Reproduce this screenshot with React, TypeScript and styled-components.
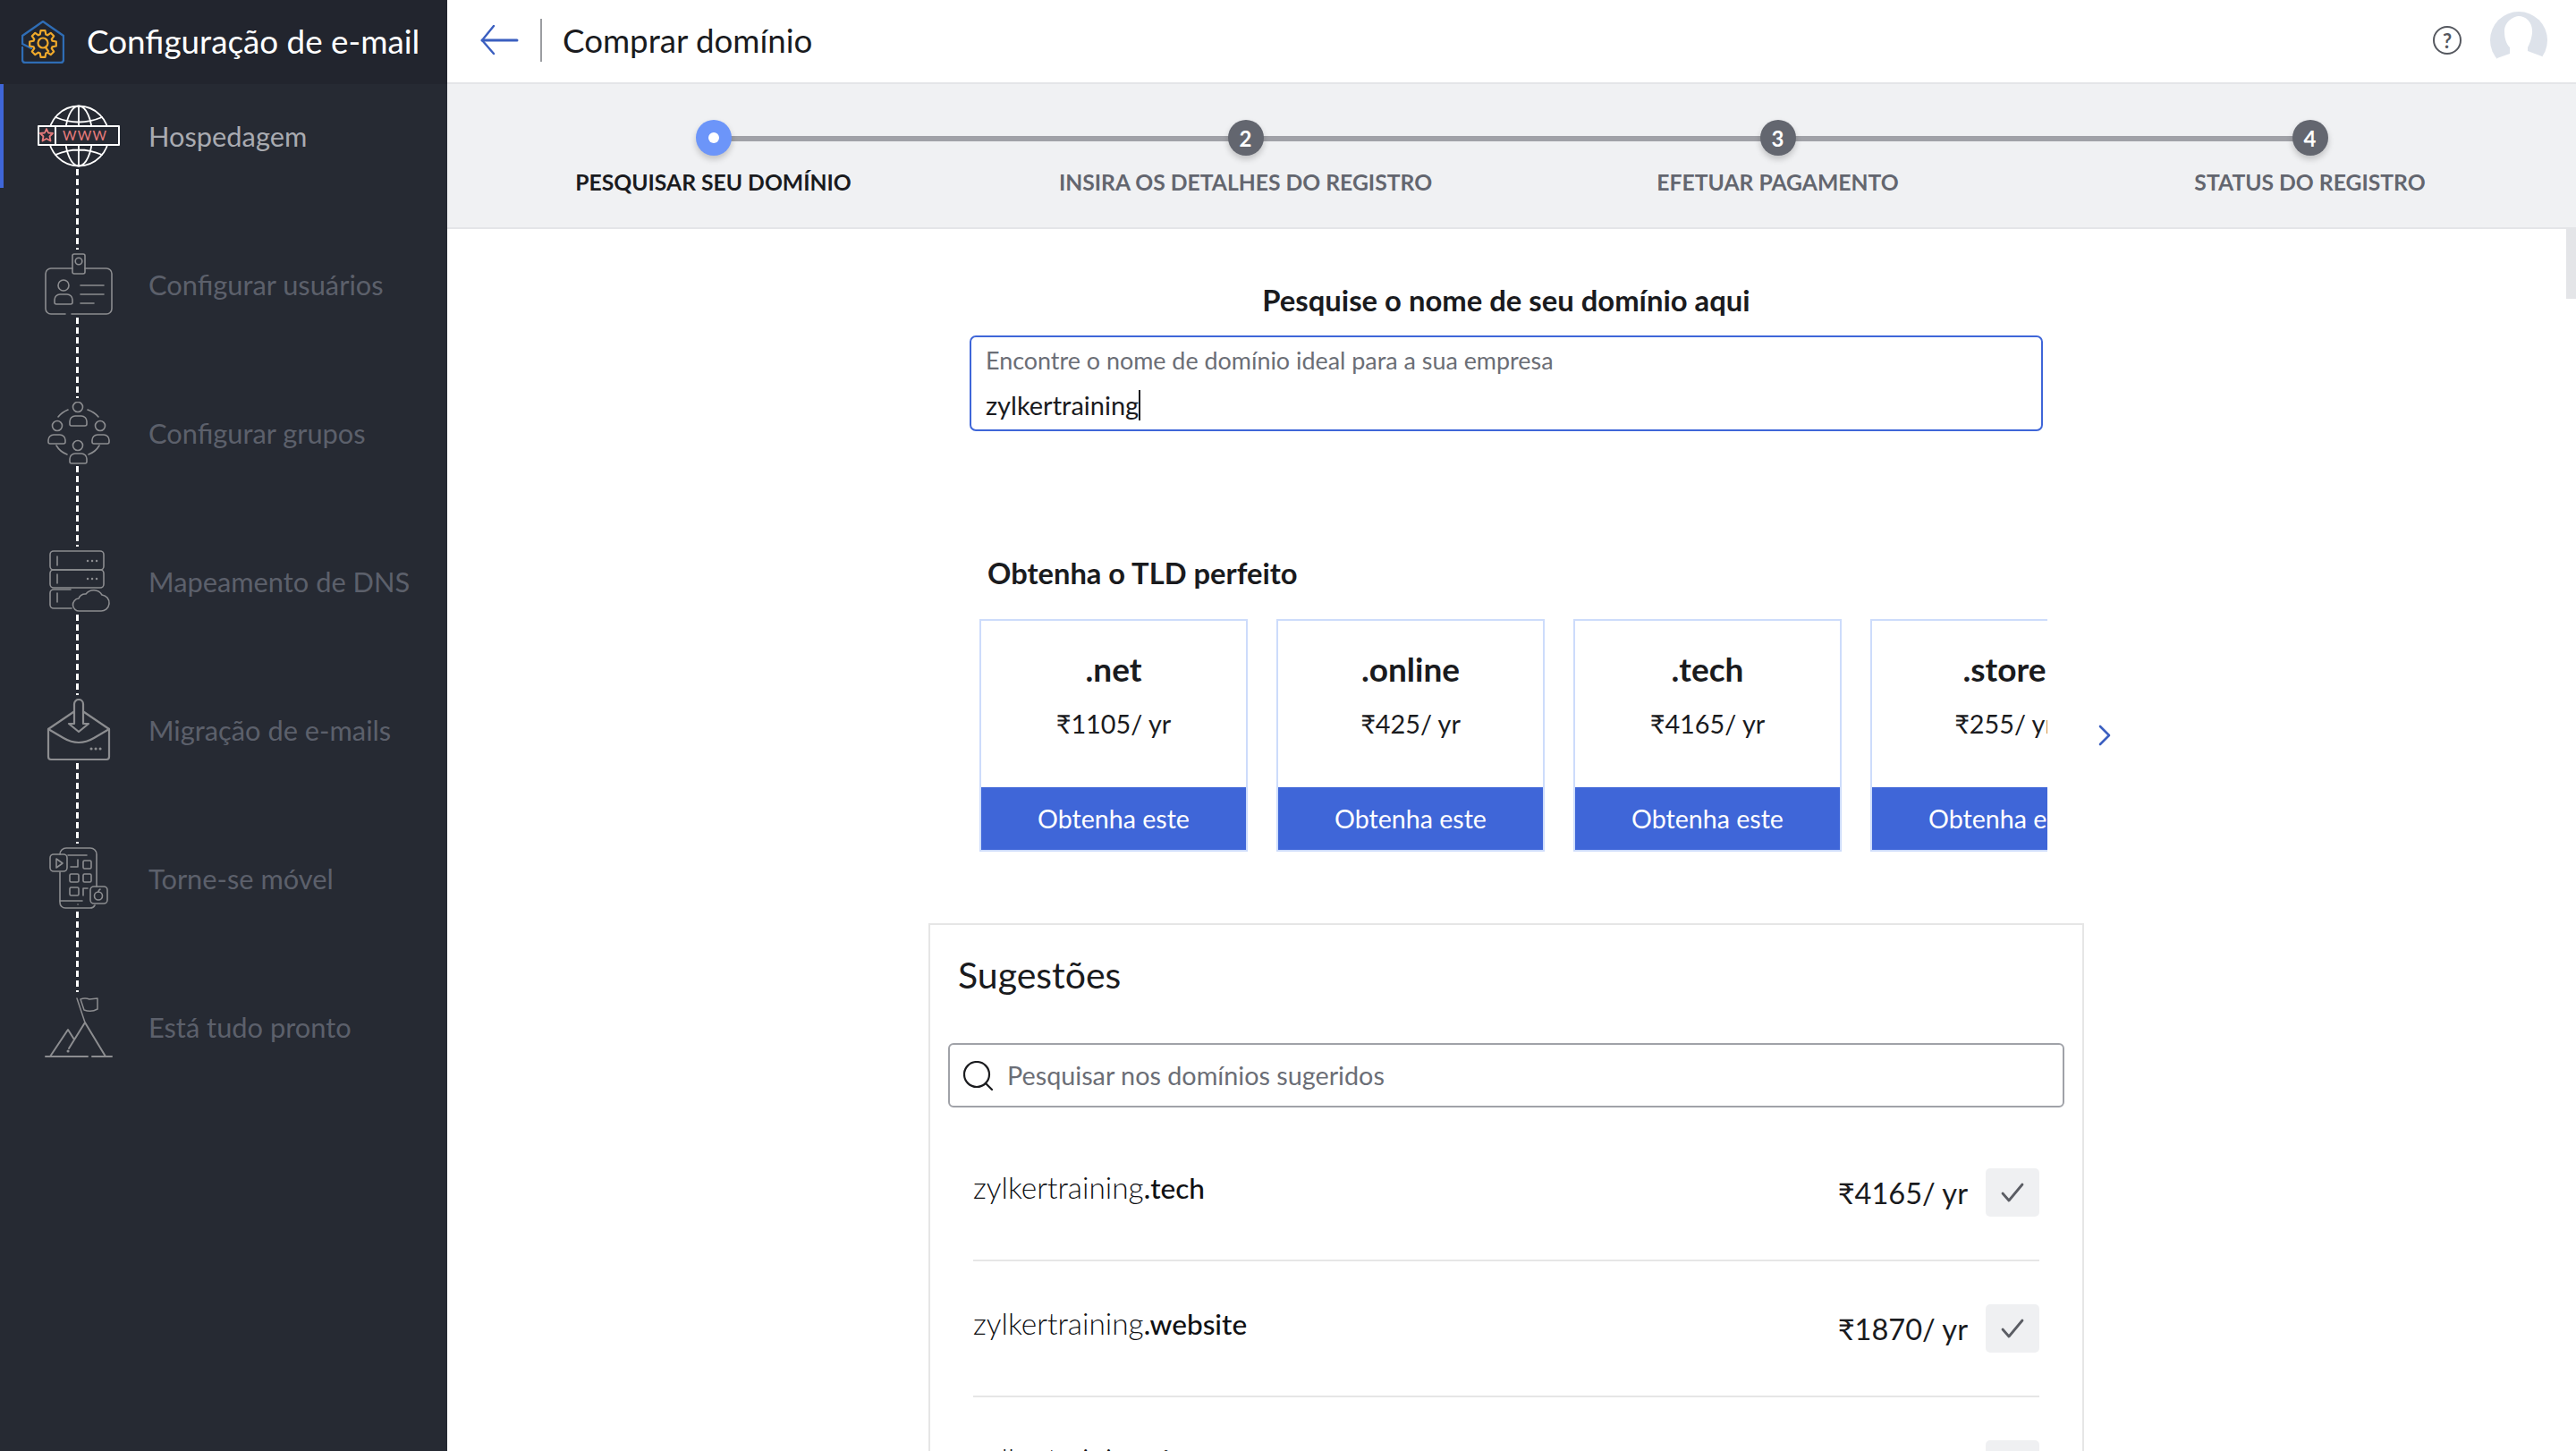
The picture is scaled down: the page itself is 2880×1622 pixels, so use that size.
import React from "react";
import styled, { createGlobalStyle } from "styled-components";

const GlobalStyle = createGlobalStyle`
  html, body, #root {
    margin: 0;
    padding: 0;
    height: 100%;
  }
  body {
    font-family: Lato, "Noto Sans", "DejaVu Sans", sans-serif;
    color: #1a1b1e;
    background: #ffffff;
    overflow: hidden;
  }
  * {
    box-sizing: border-box;
  }
`;

const Page = styled.div`
  display: flex;
  width: 2880px;
  height: 1622px;
  overflow: hidden;
`;

const Sidebar = styled.aside`
  width: 500px;
  flex-shrink: 0;
  background: #262a33;
`;

const Brand = styled.div`
  display: flex;
  align-items: center;
  height: 94px;
  padding-left: 24px;
  gap: 25px;
  background: #22252e;
`;

const BrandName = styled.span`
  color: #ffffff;
  font-size: 36.8px;
  margin-bottom: 2px;
  white-space: nowrap;
`;

const Nav = styled.nav`
  display: flex;
  flex-direction: column;
  gap: 50px;
`;

const NavItem = styled.div<{ $active?: boolean }>`
  position: relative;
  display: flex;
  align-items: center;
  height: 116px;
  padding: 2px 0 0 39px;
  gap: 31px;
  color: ${(p) => (p.$active ? "#a9abb1" : "#5c606b")};
  font-size: 30.8px;
  &::before {
    content: "";
    display: ${(p) => (p.$active ? "block" : "none")};
    position: absolute;
    left: 0;
    top: 0;
    bottom: 0;
    width: 4px;
    background: #3f66d8;
  }
`;

const NavLabel = styled.span`
  margin-bottom: 2px;
`;

const Connector = styled.span`
  position: absolute;
  left: 85px;
  top: 95px;
  width: 3px;
  height: 90px;
  background: repeating-linear-gradient(to bottom, #ffffff 0 7px, transparent 7px 11px);
`;

const NavIconBox = styled.span<{ $active?: boolean }>`
  display: flex;
  width: 96px;
  height: 72px;
  flex-shrink: 0;
  color: ${(p) => (p.$active ? "#ffffff" : "#8c8d90")};
`;

const Main = styled.main`
  display: flex;
  flex-direction: column;
  flex: 1;
  min-width: 0;
`;

const TopBar = styled.header`
  display: flex;
  align-items: center;
  height: 94px;
  padding: 0 32px 2px 36px;
  border-bottom: 2px solid #e4e5e8;
`;

const BackButton = styled.span`
  display: flex;
  width: 44px;
  color: #3b5fc0;
`;

const TopDivider = styled.span`
  width: 2px;
  height: 48px;
  margin: 0 23px 0 24px;
  background: #9b9da1;
`;

const PageTitle = styled.h1`
  flex: 1;
  margin: 0;
  font-size: 36.7px;
  font-weight: 400;
`;

const HelpBadge = styled.span`
  display: flex;
  align-items: center;
  justify-content: center;
  width: 32px;
  height: 32px;
  margin-right: 32px;
  border: 2px solid #55585f;
  border-radius: 50%;
  color: #55585f;
  font-size: 22px;
  font-weight: 700;
`;

const Avatar = styled.span`
  display: flex;
  width: 64px;
  height: 64px;
`;

const Stepper = styled.div`
  display: grid;
  grid-template-columns: repeat(4, 1fr);
  height: 162px;
  padding-top: 40px;
  background: #f0f1f3;
  border-bottom: 2px solid #e4e5e8;
`;

const Step = styled.div<{ $active?: boolean; $last?: boolean }>`
  position: relative;
  display: flex;
  flex-direction: column;
  align-items: center;
  color: ${(p) => (p.$active ? "#1a1b1e" : "#63666f")};
  &::after {
    content: "";
    display: ${(p) => (p.$last ? "none" : "block")};
    position: absolute;
    left: 50%;
    top: 18px;
    width: 100%;
    height: 6px;
    background: #a0a1a7;
  }
`;

const StepDot = styled.span<{ $active?: boolean }>`
  position: relative;
  z-index: 1;
  display: flex;
  align-items: center;
  justify-content: center;
  width: 40px;
  height: 40px;
  border-radius: 50%;
  background: ${(p) => (p.$active ? "#6c95f9" : "#63666f")};
  box-shadow: 0 4px 7px rgba(0, 0, 0, 0.2);
  color: #ffffff;
  font-size: 24px;
  font-weight: 700;
`;

const StepPip = styled.span`
  width: 12px;
  height: 12px;
  border-radius: 50%;
  background: #ffffff;
`;

const StepLabel = styled.span`
  margin-top: 14px;
  font-size: 24.7px;
  line-height: 32px;
  font-weight: 700;
  white-space: nowrap;
`;

const Content = styled.section`
  position: relative;
  flex: 1;
  display: flex;
  flex-direction: column;
  align-items: center;
  min-height: 0;
  padding-right: 12px;
  overflow: hidden;
`;

const ScrollThumb = styled.span`
  position: absolute;
  right: 0;
  top: 0;
  width: 11px;
  height: 78px;
  background: #e4e5e8;
`;

const SearchHeading = styled.h2`
  margin: 59px 0 0;
  font-size: 32.8px;
  line-height: 42px;
  font-weight: 700;
`;

const DomainBox = styled.div`
  display: flex;
  flex-direction: column;
  flex-shrink: 0;
  width: 1200px;
  height: 107px;
  margin-top: 18px;
  padding: 8px 16px 0;
  border: 2px solid #3f66d8;
  border-radius: 7px;
`;

const DomainLabel = styled.span`
  color: #6b6e76;
  font-size: 26.9px;
  line-height: 35px;
`;

const DomainValue = styled.span`
  display: flex;
  align-items: center;
  margin-top: 13px;
  font-size: 29px;
  line-height: 40px;
`;

const Caret = styled.span`
  width: 2px;
  height: 34px;
  background: #1a1b1e;
`;

const TldSection = styled.div`
  flex-shrink: 0;
  width: 1200px;
  margin-top: 139px;
`;

const TldHeading = styled.h3`
  margin: 0 0 31px 20px;
  font-size: 32.7px;
  line-height: 40px;
  font-weight: 700;
`;

const TldRow = styled.div`
  display: flex;
  align-items: center;
  width: max-content;
  margin-left: 11px;
  gap: 57px;
`;

const TldCarousel = styled.div`
  display: flex;
  width: 1194px;
  gap: 32px;
  overflow: hidden;
`;

const TldCard = styled.div`
  display: flex;
  flex-direction: column;
  flex-shrink: 0;
  width: 300px;
  height: 260px;
  border: 2px solid #cddcfb;
`;

const TldBody = styled.div`
  flex: 1;
  padding-top: 32px;
  text-align: center;
`;

const TldName = styled.div`
  font-size: 37px;
  line-height: 44px;
  font-weight: 700;
`;

const TldPrice = styled.div`
  margin-top: 21px;
  font-size: 28.8px;
  line-height: 36px;
`;

const TldButton = styled.div`
  height: 70px;
  background: #3f66d8;
  color: #ffffff;
  font-size: 28.6px;
  line-height: 70px;
  text-align: center;
`;

const NextArrow = styled.span`
  display: flex;
  margin-top: 0;
  color: #3b5fc0;
`;

const SuggestCard = styled.div`
  flex-shrink: 0;
  width: 1292px;
  margin-top: 80px;
  padding: 32px 48px 0;
  border: 2px solid #e6e6e6;
  border-bottom: 0;
`;

const SuggestTitle = styled.h3`
  margin: 0 0 0 -17px;
  font-size: 41px;
  line-height: 48px;
  font-weight: 400;
`;

const SuggestSearch = styled.div`
  display: flex;
  align-items: center;
  height: 72px;
  margin: 52px -28px 20px -28px;
  padding-left: 15px;
  gap: 16px;
  border: 2px solid #a0a2a8;
  border-radius: 6px;
  color: #6b6e76;
  font-size: 28.75px;
`;

const SearchGlyph = styled.span`
  display: flex;
  color: #1a1b1e;
`;

const SuggestRow = styled.div`
  display: flex;
  align-items: center;
  justify-content: space-between;
  height: 152px;
  border-bottom: 2px solid #e6e6e6;
`;

const DomainName = styled.span`
  margin-bottom: 13px;
  color: #101114;
  font-size: 33.4px;
  font-weight: 300;
`;

const DomainTld = styled.b`
  font-size: 31.6px;
  font-weight: 500;
`;

const RowEnd = styled.div`
  display: flex;
  align-items: center;
  gap: 20px;
`;

const RowPrice = styled.span`
  margin-top: 1px;
  font-size: 32.6px;
`;

const CheckButton = styled.span`
  display: flex;
  align-items: center;
  justify-content: center;
  width: 60px;
  height: 54px;
  border-radius: 5px;
  background: #eff0f2;
  color: #5b5d64;
`;

const gearPoints = () => {
  const pts: string[] = [];
  for (let i = 0; i < 8; i++) {
    const a = (i * Math.PI) / 4;
    [
      [-0.3, 11],
      [-0.17, 15],
      [0.17, 15],
      [0.3, 11],
    ].forEach(([d, r]) => {
      pts.push(`${(24 + r * Math.sin(a + d)).toFixed(1)},${(26 - r * Math.cos(a + d)).toFixed(1)}`);
    });
  }
  return pts.join(" ");
};

const BrandLogo = () => (
  <svg width="48" height="48" viewBox="0 0 48 48" fill="none">
    <path
      d="M1 30V44a3 3 0 0 0 3 3H44a3 3 0 0 0 3-3V17L24 1 1 17v9l10 5"
      stroke="#2f6db5"
      strokeWidth="2.4"
      strokeLinejoin="round"
      strokeLinecap="round"
    />
    <polygon points={gearPoints()} fill="#22252e" stroke="#efa92b" strokeWidth="2.2" strokeLinejoin="round" />
    <circle cx="24" cy="25" r="5.5" stroke="#efa92b" strokeWidth="2.2" />
    <path d="M27 30l3.5 5" stroke="#efa92b" strokeWidth="2.2" />
  </svg>
);

const IconSvg = ({ children, width = 1.6 }: { children: React.ReactNode; width?: number }) => (
  <svg
    width="96"
    height="72"
    viewBox="0 0 96 72"
    fill="none"
    stroke="currentColor"
    strokeWidth={width}
    strokeLinecap="round"
    strokeLinejoin="round"
  >
    {children}
  </svg>
);

const GlobeIcon = () => (
  <IconSvg width={1.8}>
    <circle cx="49" cy="35" r="33.5" />
    <ellipse cx="49" cy="35" rx="15" ry="33.5" />
    <path d="M49 2v66M23 14q26 11 52 0M23 56q26-11 52 0" />
    <rect x="4" y="24" width="90" height="21" fill="#262a33" strokeWidth="2" strokeLinecap="square" />
    <path d="M23 24v21" strokeWidth="2" />
    <polygon
      points="13,27 15,31.5 20,32 16.5,35.5 17.5,40.5 13,38 8.5,40.5 9.5,35.5 6,32 11,31.5"
      stroke="#e87c7c"
    />
    <text
      x="31"
      y="40"
      fill="#e87c7c"
      stroke="none"
      fontSize="15"
      fontFamily="Lato, sans-serif"
      textLength="49"
      lengthAdjust="spacing"
    >
      WWW
    </text>
  </IconSvg>
);

const IdCardIcon = () => (
  <IconSvg>
    <path d="M34 68H18a6 6 0 0 1-6-6V23a6 6 0 0 1 6-6H42M56 17H80a6 6 0 0 1 6 6V62a6 6 0 0 1-6 6H41" />
    <rect x="42" y="1" width="14" height="22" rx="2" />
    <circle cx="49" cy="9" r="3.8" />
    <circle cx="32" cy="36" r="6" />
    <path d="M24 57a2 2 0 0 1-2-2v-3a6 6 0 0 1 6-6h8a6 6 0 0 1 6 6v3a2 2 0 0 1-2 2z" />
    <path d="M51 36h26M51 46h26M51 56h15" />
  </IconSvg>
);

const personBody = (x: number, y: number, h: number) =>
  `M${x + 2} ${y + h}a2 2 0 0 1-2-2v-${h - 8}a6 6 0 0 1 6-6h7a6 6 0 0 1 6 6v${h - 8}a2 2 0 0 1-2 2z`;

const GroupIcon = () => (
  <IconSvg>
    <circle cx="48" cy="6" r="5.5" />
    <path d={personBody(39, 16, 11)} />
    <circle cx="25" cy="27" r="5.5" />
    <path d={personBody(15, 37, 10)} />
    <circle cx="73" cy="27" r="5.5" />
    <path d={personBody(64, 37, 10)} />
    <circle cx="48" cy="49" r="5.5" />
    <path d={personBody(39, 58, 11)} />
    <path d="M26 17q4-5 11-8M59 9q8 3 12 8M24 49q4 7 12 10M60 59q8-3 12-10" />
  </IconSvg>
);

const ServerIcon = () => (
  <IconSvg>
    <rect x="17" y="1" width="60" height="21" rx="4" />
    <rect x="17" y="22" width="60" height="20" rx="4" />
    <path d="M40 44H21a4 4 0 0 0-4 4v13a4 4 0 0 0 4 4H41" />
    <path d="M25 7v10M25 27v10M25 48v10" />
    <path d="M59 12h.1M64 12h.1M69 12h.1M59 32h.1M64 32h.1M69 32h.1" strokeWidth="2.4" />
    <path d="M50 68a7 7 0 0 1-1-14 8 8 0 0 1 8-5 11 11 0 0 1 18 1 9 9 0 0 1-2 18z" fill="#262a33" />
  </IconSvg>
);

const InboxIcon = () => (
  <IconSvg width={2.2}>
    <path d="M43 15 15 34V65a3 3 0 0 0 3 3H80a3 3 0 0 0 3-3V34L55 15" />
    <path d="M44 28V6a5 5 0 0 1 10 0V28h6L49 37 38 28z" />
    <path d="M15 34 32 44q17 10 34 0L83 34" />
    <path d="M63 56h.1M68 56h.1M73 56h.1" strokeWidth="3" />
  </IconSvg>
);

const MobileIcon = () => (
  <IconSvg>
    <path d="M28 8a7 7 0 0 1 7-7H62a7 7 0 0 1 7 7V44M28 28V62a6 6 0 0 0 6 6H62a6 6 0 0 0 5-3" />
    <rect x="17" y="8" width="19" height="19" rx="4" />
    <path d="M24 13l7 5-7 5z" />
    <rect x="62" y="44" width="19" height="19" rx="4" />
    <circle cx="71" cy="54.5" r="4.5" />
    <path d="M71 50q0-2 2-3" />
    <path d="M37 9H58M40 22H48V14" />
    <rect x="54" y="15" width="9" height="9" rx="1.5" />
    <rect x="39" y="30" width="10" height="9" rx="1.5" />
    <rect x="54" y="30" width="9" height="9" rx="1.5" />
    <rect x="39" y="45" width="10" height="9" rx="1.5" />
    <path d="M54 54V46H59M28 60H53M48 64h.1" />
  </IconSvg>
);

const SummitIcon = () => (
  <IconSvg width={2}>
    <path d="M12 68H59M64 68H86" />
    <path d="M17 68 37 38l7 11M38 59 56 30 79 68" />
    <path d="M47 3 56 30" strokeWidth="1.5" />
    <path d="M51 4q5-2 10 0l9-1V15q-7 4-15 1z" strokeWidth="1.5" />
    <path d="M37 62h.1" strokeWidth="3" />
  </IconSvg>
);

const BackIcon = () => (
  <svg width="44" height="34" viewBox="0 0 44 34" fill="none" stroke="currentColor" strokeLinecap="round">
    <path d="M3 17H42" strokeWidth="3" />
    <path d="M16 1 3 17l13 15" strokeWidth="2.4" strokeLinejoin="round" />
  </svg>
);

const AvatarIcon = () => (
  <svg width="64" height="64" viewBox="0 0 64 64">
    <circle cx="32" cy="32" r="32" fill="#dde2ea" />
    <path
      d="M16 22C16 10 28 5 32 5C40 5 48 12 47 24C46 32 44 36 42 40L42 44L58 50L58 64L6 64L8 52L22 47L22 40C18 36 16 30 16 22Z"
      fill="#ffffff"
    />
  </svg>
);

const ChevronIcon = () => (
  <svg width="14" height="24" viewBox="0 0 14 24" fill="none" stroke="currentColor" strokeWidth="2.6" strokeLinecap="round" strokeLinejoin="round">
    <path d="M2 2l10 10L2 22" />
  </svg>
);

const LensIcon = () => (
  <svg width="33" height="33" viewBox="0 0 33 33" fill="none" stroke="currentColor" strokeWidth="2.2" strokeLinecap="round">
    <circle cx="15" cy="15" r="14" />
    <path d="M25 25l7 7" />
  </svg>
);

const TickIcon = () => (
  <svg width="26" height="22" viewBox="0 0 26 22" fill="none" stroke="currentColor" strokeWidth="2.8" strokeLinecap="round" strokeLinejoin="round">
    <path d="M2 12l7 8L24 2" />
  </svg>
);

const navItems = [
  { label: "Hospedagem", icon: <GlobeIcon />, active: true },
  { label: "Configurar usuários", icon: <IdCardIcon /> },
  { label: "Configurar grupos", icon: <GroupIcon /> },
  { label: "Mapeamento de DNS", icon: <ServerIcon /> },
  { label: "Migração de e-mails", icon: <InboxIcon /> },
  { label: "Torne-se móvel", icon: <MobileIcon /> },
  { label: "Está tudo pronto", icon: <SummitIcon /> },
];

const steps = ["PESQUISAR SEU DOMÍNIO", "INSIRA OS DETALHES DO REGISTRO", "EFETUAR PAGAMENTO", "STATUS DO REGISTRO"];

const tlds = [
  { name: ".net", price: "₹1105/ yr" },
  { name: ".online", price: "₹425/ yr" },
  { name: ".tech", price: "₹4165/ yr" },
  { name: ".store", price: "₹255/ yr" },
];

const suggestions = [
  { tld: ".tech", price: "₹4165/ yr" },
  { tld: ".website", price: "₹1870/ yr" },
  { tld: ".site", price: "₹1870/ yr" },
];

export default function App() {
  return (
    <Page>
      <GlobalStyle />
      <Sidebar>
        <Brand>
          <BrandLogo />
          <BrandName>Configuração de e-mail</BrandName>
        </Brand>
        <Nav>
          {navItems.map((item, i) => (
            <NavItem key={item.label} $active={item.active}>
              <NavIconBox $active={item.active}>{item.icon}</NavIconBox>
              <NavLabel>{item.label}</NavLabel>
              {i < navItems.length - 1 && <Connector />}
            </NavItem>
          ))}
        </Nav>
      </Sidebar>
      <Main>
        <TopBar>
          <BackButton>
            <BackIcon />
          </BackButton>
          <TopDivider />
          <PageTitle>Comprar domínio</PageTitle>
          <HelpBadge>?</HelpBadge>
          <Avatar>
            <AvatarIcon />
          </Avatar>
        </TopBar>
        <Stepper>
          {steps.map((label, i) => (
            <Step key={label} $active={i === 0} $last={i === steps.length - 1}>
              <StepDot $active={i === 0}>{i === 0 ? <StepPip /> : i + 1}</StepDot>
              <StepLabel>{label}</StepLabel>
            </Step>
          ))}
        </Stepper>
        <Content>
          <ScrollThumb />
          <SearchHeading>Pesquise o nome de seu domínio aqui</SearchHeading>
          <DomainBox>
            <DomainLabel>Encontre o nome de domínio ideal para a sua empresa</DomainLabel>
            <DomainValue>
              zylkertraining
              <Caret />
            </DomainValue>
          </DomainBox>
          <TldSection>
            <TldHeading>Obtenha o TLD perfeito</TldHeading>
            <TldRow>
              <TldCarousel>
                {tlds.map((tld) => (
                  <TldCard key={tld.name}>
                    <TldBody>
                      <TldName>{tld.name}</TldName>
                      <TldPrice>{tld.price}</TldPrice>
                    </TldBody>
                    <TldButton>Obtenha este</TldButton>
                  </TldCard>
                ))}
              </TldCarousel>
              <NextArrow>
                <ChevronIcon />
              </NextArrow>
            </TldRow>
          </TldSection>
          <SuggestCard>
            <SuggestTitle>Sugestões</SuggestTitle>
            <SuggestSearch>
              <SearchGlyph>
                <LensIcon />
              </SearchGlyph>
              Pesquisar nos domínios sugeridos
            </SuggestSearch>
            {suggestions.map((s) => (
              <SuggestRow key={s.tld}>
                <DomainName>
                  zylkertraining<DomainTld>{s.tld}</DomainTld>
                </DomainName>
                <RowEnd>
                  <RowPrice>{s.price}</RowPrice>
                  <CheckButton>
                    <TickIcon />
                  </CheckButton>
                </RowEnd>
              </SuggestRow>
            ))}
          </SuggestCard>
        </Content>
      </Main>
    </Page>
  );
}
